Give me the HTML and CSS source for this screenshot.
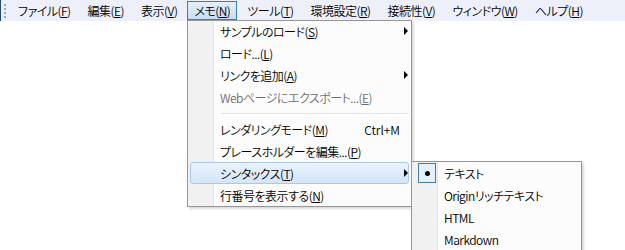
FILE: index.html
```html
<!DOCTYPE html>
<html lang="ja">

<head>
    <meta charset="UTF-8">
    <title>メモ</title>
    <link rel="stylesheet" href="styles.css">
</head>

<body>
    <div class="menubar">
        <span class="grip"></span>
        <span class="bar-item">ファイル(<u>F</u>)</span>
        <span class="bar-item">編集(<u>E</u>)</span>
        <span class="bar-item">表示(<u>V</u>)</span>
        <span class="bar-item open">メモ(<u>N</u>)</span>
        <span class="bar-item">ツール(<u>T</u>)</span>
        <span class="bar-item">環境設定(<u>R</u>)</span>
        <span class="bar-item">接続性(<u>V</u>)</span>
        <span class="bar-item">ウィンドウ(<u>W</u>)</span>
        <span class="bar-item">ヘルプ(<u>H</u>)</span>
    </div>

    <div class="menu main-menu">
        <div class="row"><span class="label">サンプルのロード(<u>S</u>)</span><span class="arrow"></span></div>
        <div class="row"><span class="label">ロード...(<u>L</u>)</span></div>
        <div class="row"><span class="label">リンクを追加(<u>A</u>)</span><span class="arrow"></span></div>
        <div class="row disabled"><span class="label">Webページにエクスポート...(<u>E</u>)</span></div>
        <div class="sep"></div>
        <div class="row"><span class="label">レンダリングモード(<u>M</u>)</span><span class="key">Ctrl+M</span></div>
        <div class="row"><span class="label">プレースホルダーを編集...(<u>P</u>)</span></div>
        <div class="row hot"><span class="label">シンタックス(<u>T</u>)</span><span class="arrow"></span></div>
        <div class="row"><span class="label">行番号を表示する(<u>N</u>)</span></div>
    </div>

    <div class="menu sub-menu">
        <div class="row checked"><span class="check"><span class="dot"></span></span><span class="label">テキスト</span></div>
        <div class="row"><span class="label">Originリッチテキスト</span></div>
        <div class="row"><span class="label">HTML</span></div>
        <div class="row"><span class="label">Markdown</span></div>
    </div>
</body>

</html>
```

FILE: styles.css
```css
body {
    margin: 0;
    width: 625px;
    height: 250px;
    overflow: hidden;
    background: #ffffff;
    color: #000000;
    font-family: "Noto Sans CJK JP", "Noto Sans", sans-serif;
    font-size: 12px;
    font-weight: 350;
    letter-spacing: -0.5px;
    font-feature-settings: "palt";
    position: relative;
}

u {
    text-decoration: underline;
    text-underline-offset: 1px;
}

.menubar {
    display: flex;
    align-items: center;
    height: 21px;
    padding-left: 10px;
    border-left: 1px solid #1f4a78;
    background: #eef0f9;
    box-sizing: border-box;
}

.grip {
    position: absolute;
    left: 4px;
    top: 4px;
    width: 2px;
    height: 14px;
    background: repeating-linear-gradient(to bottom, #a0a4b0 0 2px, transparent 2px 4px);
}

.bar-item {
    display: flex;
    align-items: center;
    height: 19px;
    padding: 0 6px;
    margin-right: 3px;
    border: 1px solid transparent;
    box-sizing: border-box;
    white-space: nowrap;
}

.bar-item.open {
    border-color: #3c7fb1;
    background: linear-gradient(to bottom, #e4effb, #c8dcf2);
}

.menu {
    position: absolute;
    background: linear-gradient(to right, #f1f1f1 0 25px, #e2e3e3 25px 26px, #ffffff 26px 27px, #fcfcfc 27px);
    border: 1px solid #979797;
    box-shadow: 2px 2px 2px rgba(0, 0, 0, 0.15);
}

.main-menu {
    left: 187px;
    top: 20px;
    width: 223px;
    height: 185px;
}

.sub-menu {
    left: 411px;
    top: 161px;
    width: 169px;
    height: 100px;
}

.row {
    position: relative;
    display: flex;
    align-items: center;
    height: 22px;
    margin: 0 2px;
    padding-left: 29px;
    padding-right: 0;
    border: 1px solid transparent;
    border-radius: 3px;
    box-sizing: border-box;
    white-space: nowrap;
}

.main-menu .row:first-child {
    margin-top: -1px;
}

.label {
    flex: 1;
}

.disabled {
    color: #6d6d6d;
}

.key {
    margin-right: 8px;
    letter-spacing: 0;
}

.arrow {
    width: 0;
    height: 0;
    border-top: 4px solid transparent;
    border-bottom: 4px solid transparent;
    border-left: 4px solid #000000;
}

.sep {
    height: 1px;
    margin: 5px 2px 3px 33px;
    background: #e2e3e3;
    border-bottom: 1px solid #ffffff;
}

.hot {
    border-color: #a9c7e8;
    background: linear-gradient(to bottom, #eaf3fd, #d2e5fa);
}

.check {
    position: absolute;
    left: 3px;
    top: 0;
    width: 18px;
    height: 20px;
    border: 1px solid #3c7fb1;
    background: #e6f0fb;
    box-sizing: border-box;
    display: flex;
    align-items: center;
    justify-content: center;
}

.dot {
    width: 5px;
    height: 5px;
    border-radius: 50%;
    background: #000000;
}
```
